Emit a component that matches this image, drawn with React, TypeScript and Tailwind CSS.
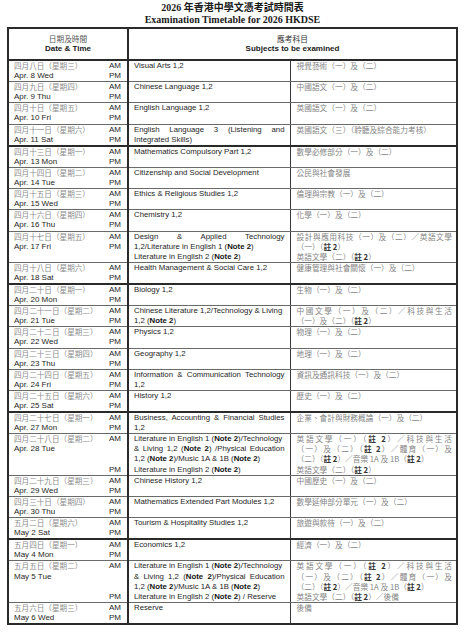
import React from "react";

type Line = { t: string; j?: boolean };
type Row = {
  cn: string;
  en: string;
  mid: Line[];
  zh: Line[];
  pm?: number;
  thick?: boolean;
};

const L = (t: string, j = false): Line => ({ t, j });

const SANS = "font-['Liberation_Sans',Arial,sans-serif]";
const CJK = "font-['Noto_Sans_CJK_TC','Noto_Sans_CJK_SC',sans-serif]";

const rows: Row[] = [
  { cn: "四月八日（星期三）", en: "Apr. 8 Wed", mid: [L("Visual Arts 1,2")], zh: [L("視覺藝術（一）及（二）")] },
  { cn: "四月九日（星期四）", en: "Apr. 9 Thu", mid: [L("Chinese Language 1,2")], zh: [L("中國語文（一）及（二）")] },
  { cn: "四月十日（星期五）", en: "Apr. 10 Fri", mid: [L("English Language 1,2")], zh: [L("英國語文（一）及（二）")] },
  {
    cn: "四月十一日（星期六）",
    en: "Apr. 11 Sat",
    mid: [L("English Language 3 (Listening and", true), L("Integrated Skills)")],
    zh: [L("英國語文（三）（聆聽及綜合能力考核）")],
    thick: true,
  },
  { cn: "四月十三日（星期一）", en: "Apr. 13 Mon", mid: [L("Mathematics Compulsory Part 1,2")], zh: [L("數學必修部分（一）及（二）")] },
  { cn: "四月十四日（星期二）", en: "Apr. 14 Tue", mid: [L("Citizenship and Social Development")], zh: [L("公民與社會發展")] },
  { cn: "四月十五日（星期三）", en: "Apr. 15 Wed", mid: [L("Ethics & Religious Studies 1,2")], zh: [L("倫理與宗教（一）及（二）")] },
  { cn: "四月十六日（星期四）", en: "Apr. 16 Thu", mid: [L("Chemistry 1,2")], zh: [L("化學（一）及（二）")] },
  {
    cn: "四月十七日（星期五）",
    en: "Apr. 17 Fri",
    mid: [
      L("Design & Applied Technology", true),
      L("1,2/Literature in English 1 (**Note 2**)"),
      L("Literature in English 2 (**Note 2**)"),
    ],
    zh: [
      L("設計與應用科技（一）及（二）／英語文學", true),
      L("（一）（**註 2**）"),
      L("英語文學（二）（**註 2**）"),
    ],
    pm: 1,
  },
  {
    cn: "四月十八日（星期六）",
    en: "Apr. 18 Sat",
    mid: [L("Health Management & Social Care 1,2")],
    zh: [L("健康管理與社會關懷（一）及（二）")],
    thick: true,
  },
  { cn: "四月二十日（星期一）", en: "Apr. 20 Mon", mid: [L("Biology 1,2")], zh: [L("生物（一）及（二）")] },
  {
    cn: "四月二十一日（星期二）",
    en: "Apr. 21 Tue",
    mid: [L("Chinese Literature 1,2/Technology & Living"), L("1,2 (**Note 2**)")],
    zh: [L("中國文學（一）及（二）／科技與生活", true), L("（一）及（二）（**註 2**）")],
  },
  { cn: "四月二十二日（星期三）", en: "Apr. 22 Wed", mid: [L("Physics 1,2")], zh: [L("物理（一）及（二）")] },
  { cn: "四月二十三日（星期四）", en: "Apr. 23 Thu", mid: [L("Geography 1,2")], zh: [L("地理（一）及（二）")] },
  {
    cn: "四月二十四日（星期五）",
    en: "Apr. 24 Fri",
    mid: [L("Information & Communication Technology", true), L("1,2")],
    zh: [L("資訊及通訊科技（一）及（二）")],
  },
  {
    cn: "四月二十五日（星期六）",
    en: "Apr. 25 Sat",
    mid: [L("History 1,2")],
    zh: [L("歷史（一）及（二）")],
    thick: true,
  },
  {
    cn: "四月二十七日（星期一）",
    en: "Apr. 27 Mon",
    mid: [L("Business, Accounting & Financial Studies", true), L("1,2")],
    zh: [L("企業、會計與財務概論（一）及（二）")],
  },
  {
    cn: "四月二十八日（星期二）",
    en: "Apr. 28 Tue",
    mid: [
      L("Literature in English 1 (**Note 2**)/Technology"),
      L("& Living 1,2 (**Note 2**) /Physical Education", true),
      L("1,2 (**Note 2**)/Music 1A & 1B (**Note 2**)"),
      L("Literature in English 2 (**Note 2**)"),
    ],
    zh: [
      L("英語文學（一）（**註 2**）／科技與生活", true),
      L("（一）及（二）（**註 2**）／體育（一）及", true),
      L("（二）（**註 2**）／音樂 1A 及 1B（**註 2**）"),
      L("英語文學（二）（**註 2**）"),
    ],
  },
  { cn: "四月二十九日（星期三）", en: "Apr. 29 Wed", mid: [L("Chinese History 1,2")], zh: [L("中國歷史（一）及（二）")] },
  {
    cn: "四月三十日（星期四）",
    en: "Apr. 30 Thu",
    mid: [L("Mathematics Extended Part Modules 1,2")],
    zh: [L("數學延伸部分單元（一）及（二）")],
  },
  {
    cn: "五月二日（星期六）",
    en: "May 2 Sat",
    mid: [L("Tourism & Hospitality Studies 1,2")],
    zh: [L("旅遊與款待（一）及（二）")],
    thick: true,
  },
  { cn: "五月四日（星期一）", en: "May 4 Mon", mid: [L("Economics 1,2")], zh: [L("經濟（一）及（二）")] },
  {
    cn: "五月五日（星期二）",
    en: "May 5 Tue",
    mid: [
      L("Literature in English 1 (**Note 2**)/Technology"),
      L("& Living 1,2 (**Note 2**)/Physical Education", true),
      L("1,2 (**Note 2**)/Music 1A & 1B (**Note 2**)"),
      L("Literature in English 2 (**Note 2**) / Reserve"),
    ],
    zh: [
      L("英語文學（一）（**註 2**）／科技與生活", true),
      L("（一）及（二）（**註 2**）／體育（一）及", true),
      L("（二）（**註 2**）／音樂 1A 及 1B（**註 2**）"),
      L("英語文學（二）（**註 2**）／後備"),
    ],
  },
  { cn: "五月六日（星期三）", en: "May 6 Wed", mid: [L("Reserve")], zh: [L("後備")] },
];

function Rich({ text, bold }: { text: string; bold: string }) {
  const parts = text.split("**");
  return (
    <>
      {parts.map((p, i) =>
        i % 2 === 1 ? (
          <span key={i} className={bold}>
            {p}
          </span>
        ) : (
          <React.Fragment key={i}>{p}</React.Fragment>
        )
      )}
    </>
  );
}

function TextLine({ line, bold }: { line: Line; bold: string }) {
  return (
    <div
      className={
        line.j
          ? "h-[10.1px] whitespace-nowrap text-justify [text-align-last:justify]"
          : "h-[10.1px] whitespace-nowrap"
      }
    >
      <Rich text={line.t} bold={bold} />
    </div>
  );
}

function TimetableRow({ row }: { row: Row }) {
  const n = Math.max(2, row.mid.length, row.zh.length);
  const pm = row.pm ?? n - 1;
  const edge = row.thick ? "border-b-2 border-b-[#2a2a2a]" : "border-b border-b-[#6a6a6a]";

  return (
    <tr>
      <td className={`${edge} border-r-2 border-r-[#2a2a2a] p-0 pl-[5px] pr-[6px] align-top`}>
        {Array.from({ length: n }).map((_, i) => (
          <div key={i} className="flex h-[10.1px] items-center justify-between leading-[10.1px]">
            <span
              className={
                i === 0
                  ? `${CJK} text-[7.6px] text-[#8d8d8d]`
                  : `${SANS} text-[8px] text-[#262626]`
              }
            >
              {i === 0 ? row.cn : i === 1 ? row.en : ""}
            </span>
            <span className={`${SANS} text-[8px] text-[#262626]`}>
              {i === 0 ? "AM" : i === pm ? "PM" : ""}
            </span>
          </div>
        ))}
      </td>
      <td
        className={`${edge} border-r border-r-[#3a3a3a] p-0 pl-[5px] pr-[5px] align-top ${SANS} text-[7.8px] leading-[10.1px] text-[#262626]`}
      >
        {row.mid.map((line, i) => (
          <TextLine key={i} line={line} bold="font-bold text-[#111]" />
        ))}
      </td>
      <td
        lang="zh-Hant"
        className={`${edge} p-0 pl-[6px] pr-[4px] align-top ${CJK} text-[7.7px] leading-[10.1px] text-[#858585]`}
      >
        {row.zh.map((line, i) => (
          <TextLine key={i} line={line} bold="font-bold text-[#333]" />
        ))}
      </td>
    </tr>
  );
}

export default function App() {
  return (
    <div className="min-h-[633px] w-[465px] bg-white">
      <div className="text-center text-[#1a1a1a]">
        <div className={`${CJK} text-[10px] font-bold leading-[13px]`}>
          <span className="font-['Liberation_Serif',serif]">2026 </span>年香港中學文憑考試時間表
        </div>
        <div className="font-['Liberation_Serif','Times_New_Roman',serif] text-[10px] font-bold leading-[12px]">
          Examination Timetable for 2026 HKDSE
        </div>
      </div>

      <table className="ml-[7px] mt-[1px] w-[449px] table-fixed border-collapse border-2 border-[#2a2a2a]">
        <colgroup>
          <col className="w-[120px]" />
          <col className="w-[162px]" />
          <col className="w-[167px]" />
        </colgroup>
        <thead>
          <tr>
            <td className="h-[32px] border-b-2 border-b-[#2a2a2a] border-r-2 border-r-[#2a2a2a] p-0 text-center align-middle">
              <div lang="zh-Hant" className={`${CJK} text-[7.7px] leading-[10px] text-[#555]`}>
                日期及時間
              </div>
              <div className={`${SANS} text-[8px] font-bold leading-[10px] text-[#1a1a1a]`}>
                Date &amp; Time
              </div>
            </td>
            <td colSpan={2} className="h-[32px] border-b-2 border-b-[#2a2a2a] p-0 text-center align-middle">
              <div lang="zh-Hant" className={`${CJK} text-[7.7px] leading-[10px] text-[#333]`}>
                應考科目
              </div>
              <div className={`${SANS} text-[8px] font-bold leading-[10px] text-[#1a1a1a]`}>
                Subjects to be examined
              </div>
            </td>
          </tr>
        </thead>
        <tbody>
          {rows.map((row) => (
            <TimetableRow key={row.en} row={row} />
          ))}
        </tbody>
      </table>
    </div>
  );
}
